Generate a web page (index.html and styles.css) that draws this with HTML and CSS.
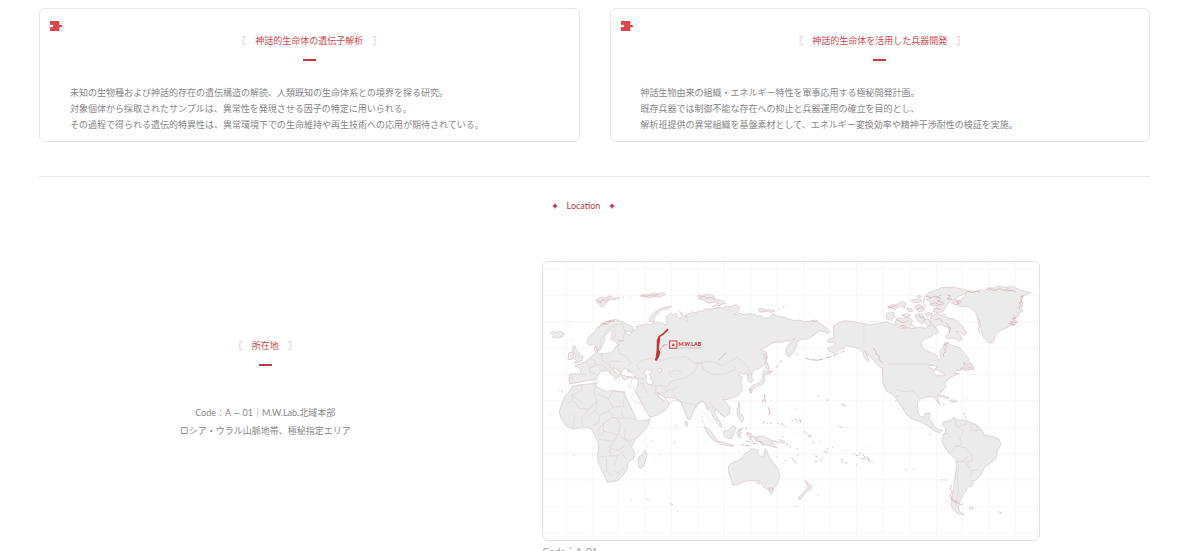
FILE: index.html
```html
<!DOCTYPE html>
<html lang="ja">
<head>
    <meta charset="UTF-8">
    <meta name="viewport" content="width=device-width, initial-scale=1.0">
    <title>M.W.Lab.</title>
    <link rel="stylesheet" href="styles.css">
</head>
<body>

<main class="page">
    <section class="cards">
        <article class="card">
            <svg class="puzzle" viewBox="0 0 36 30" aria-hidden="true"><path d="M0 0h28v12h3l2-1 3 3v4l-3 1h-5v11H0V19l3-1 5 1 2-4-2-4-5 1-3-1z"/></svg>
            <h3 class="title"><span class="bracket">〖</span>　神話的生命体の遺伝子解析　<span class="bracket">〗</span></h3>
            <div class="bar"></div>
            <p class="card-text">未知の生物種および神話的存在の遺伝構造の解読、人類既知の生命体系との境界を探る研究。<br>
            対象個体から採取されたサンプルは、異常性を発現させる因子の特定に用いられる。<br>
            その過程で得られる遺伝的特異性は、異常環境下での生命維持や再生技術への応用が期待されている。</p>
        </article>
        <article class="card">
            <svg class="puzzle" viewBox="0 0 36 30" aria-hidden="true"><path d="M0 0h28v12h3l2-1 3 3v4l-3 1h-5v11H0V19l3-1 5 1 2-4-2-4-5 1-3-1z"/></svg>
            <h3 class="title"><span class="bracket">〖</span>　神話的生命体を活用した兵器開発　<span class="bracket">〗</span></h3>
            <div class="bar"></div>
            <p class="card-text">神話生物由来の組織・エネルギー特性を軍事応用する極秘開発計画。<br>
            既存兵器では制御不能な存在への抑止と兵器運用の確立を目的とし、<br>
            解析班提供の異常組織を基盤素材として、エネルギー変換効率や精神干渉耐性の検証を実施。</p>
        </article>
    </section>

    <hr class="divider">

    <h2 class="heading">
        <svg class="spark" viewBox="0 0 12 12" aria-hidden="true"><path d="M6 0l2 4 4 2-4 2-2 4-2-4-4-2 4-2z"/></svg>
        Location
        <svg class="spark" viewBox="0 0 12 12" aria-hidden="true"><path d="M6 0l2 4 4 2-4 2-2 4-2-4-4-2 4-2z"/></svg>
    </h2>

    <section class="location">
        <div class="place">
            <h3 class="title"><span class="bracket">〖</span>　所在地　<span class="bracket">〗</span></h3>
            <div class="bar"></div>
            <p class="place-text">Code：A ― 01｜M.W.Lab.北域本部<br>ロシア・ウラル山脈地帯、極秘指定エリア</p>
        </div>
        <figure class="map">
            <svg class="map-image" viewBox="24 22 1488 834" role="img" aria-label="M.W.LAB">
                <path class="grid" d="M92 22v836M172 22v836M251 22v836M330 22v836M409 22v836M489 22v836M568 22v836M648 22v836M727 22v836M807 22v836M886 22v836M965 22v836M1045 22v836M1124 22v836M1205 22v836M1284 22v836M1363 22v836M1441 22v836M24 43h1488M24 122h1488M24 201h1488M24 280h1488M24 360h1488M24 439h1488M24 519h1488M24 597h1488M24 676h1488M24 757h1488M24 836h1488"/>

                <g class="land">
                    <!-- Eurasia -->
                    <path d="M104 388l-2-14 2-14 8-4 12 2 12-1 2-8-8-11-11-5 8-3 9 1 4-6 12-4 9-9 10-7 8-5 3-10-5-6 4-8 8 5-1 14 14 3 24-3 13-10 3-9 9-6-8-7 15-5 8 1-20-3-10 4-9-9 5-15-5-9-10 9-10 14 3 9-8 14-6 14-9 3-4-14-7-8-14 5-7-11 6-15 14-11 8-10 5-8 10-6 4-6 13-4 5-4 14-1 6-3 13 5 12 2 5 6 22 8 5 11-12 6-16-4 5 9 10 4 8-10 11-6 3-12 8 2 6-6 7 3 9-5 8 4 11-6 9 1 6-5 8 5 8 0 7 5 4-12-4-13 7-6 10-5 4 7 10-6 3 11 9 5 5-9-8-13 7 4 8 9 6 1-5 12 10 6-6-22 15-4 2-5 12 4 11-7 5 2 18-8 14 2 15-5 20 1 7-6 14 2 18-6 10 7-4 13-14 11 23-5 8 4 17-3 18 3 6 5 9-2 11 7 17-1 11-14 4 7 13 4 18 2 10 5 17 5 15-2 18 6 21-4 13 4 12 5 17 11 11 14-6 5-10-6-17-2-12 11-22 13-17 1-13 6-4 18-11 17-10 13-8-7-2-18 11-16 17-14-8 1-7 5-13-1-12 6-10-2-20 4-15 10-18 10 17 7 3 17-8 20-21 13-16 7-3 16 4 13-8 5-7-8 0-13-3-9-12 5-8-6-4 9 12 7-6 14 5 13-3 15-13 13-18 7-15 5-11-2 9 10 14 15-3 18-13 11-10-6-9-11-8-6-4 11 9 14 7 10 6 16-4 1-12-13-11-18-6-16-11-5-6-16-8-10-8 7-11 8-9 18-8 21-7 2-8-16-9-24-7-16-12-6-14-4-18 2-15-10-8-6 4 12 7 5 8 8 5-5 8 7 2 8-10 16-27 16-22 7-9-18-15-25-12-22-6-14 5-12 3-16-1-9-14-1-15-3-7-10 4-9 8 2-6 5 0 14-7 7-9-6-7-15-8-11-10-7-5 2 9 13 12 8-1 6-6-3-4 10-6-9-10-10-7-7-9-1-12 3-9 9-8 12-9 3-9 2z"/>
                    <!-- Africa -->
                    <path d="M112 395l22-4 24-3 24-1 3 10 15 7 18 8 8-5 18 2 24 4 4 13 9 18 11 23 11 24 9 9 34-6-6 17-18 24-21 21-11 20 9 20-2 15-17 13-4 21-12 18-16 15-32 5-9-22-14-31-6-25 4-25-1-17-11-17-4-15-9-10-26-2-29 5-19-12-13-20-6-20 6-19 8-24 13-15z"/>
                    <path d="M330 587l6 13-10 35-11 7-6-12 3-24 10-4z"/>
                    <!-- North America -->
                    <path d="M895 215l15-10 22-7 27 4 30 5 19 4 27-6 21-3 15 6 12 4 11 8 17 3 10-4 13 3 20-5 18 4 9-7 8-4 15 10 8 13-8 7-6-4-8 10-18 6-12 10 4 20 24 12 18 7 4 15 9-3-4-22 11-13 3-14 10 2 15 7 20 5 14 18 14 17-1 7 12 9 6 14-18 3-13-5-12 8-9-2-8 10 16-1-25 11-17 13 0 18-16 18-10 8 5 14 3 12-8-9-7-14-20 0-20 5-11 9 0 25 6 20 14 2 3-12 14-1-3 17 10 10 5 15 15 9 11 1-8 8-18-6-17-14-24-14-25-7-18-15-15-25-15-22-12-14-18-9-9-23-2-25 1-18-11-7-15-17-15-15-12-14 10 23 0 8-13-14-3-12-8-10-15-7-16-2-12-4-6 9-13 3-14 10-11-1-9-6-4-6 17-5 9-10-25-5 2-7 18-5z"/>
                    <!-- South America -->
                    <path d="M1225 503l20-5 14-10 8 8 25 1 18 7 20 10 14 15 3 12 26 4 20 10 7 14-12 20-5 25-19 14-14 10-10 21-18 19-10 1 4 11-17 9-7 13-9 12-6 13-6 20 4 15 13 8-20-3-15-14-4-21 6-29 4-33 6-38-1-28-21-18-16-22-6-16 5-16 7-12 0-10-9-8z"/>
                    <!-- Greenland -->
                    <path d="M1250 145l13-7 16-3 12-10 4-8-7-3 25-6 8 4 14-7 14 3 13-9 18 1 10-6 23 4 19-3 15 7 18 6 25 6-14 5-6 3-12 4 7 5-6 8 5 6-3 15 4 9-12 6-4 12-10 6 10 9-8 9-14 2-12 7-21 9-10 12-10 24-13-1-13-13-8-20-3-24-9-19-8-20-19-12-27-2z"/>
                    <!-- Arctic islands -->
                    <path d="M1170 125l13-12 17-5 20-9 38-1 44 10-12 9-19 8-7 9-16 4-12 14-10 18-15 6-17-6 9-8 8-9-21-1-5-10-10-8 14-4z"/>
                    <path d="M1188 185l18-8 10 5 12-3 13 12 17 2 16 12 10 9 7 15 6 5-8 8-14-9-10-2 13 12 4 11-8 7-12-9-26-1-4-7 13-8-4-16-20-10-14 2-7 8-12-18z"/>
                    <path d="M1080 206l8-16 17 2 12-5 16 10-4 15-12 8-16-2zM1054 192l2-15 10-5 14 3-4 8 5 4-12 10zM1058 157l16-8 10 3 14-11 15 3-2 15-18-5-12 11-12-5zM1128 137l18-4 16 2-6 8-18 1zM1140 155l14-6 12 6 4 12-18 5zM1140 184l10-7 14 3 6 13-8 16-12-10zM1168 192l14 2 6 12-5 9-12-9zM1146 125l10-3 5 5-9 4zM1100 182l14-5 14 5-8 8zM1116 160l14 2 4 10-13-2zM1170 178l12-5 12 4-14 8z"/>
                    <!-- Northern seas -->
                    <path d="M181 137l20-10 10 3 15-7 10 7 18-1-14 6-18 2-10 11-8 10-12-9 8-5-13 2zM315 124l18-6 8 5 14-8 16 3 11-5 10 6-15 8-20-1-8 4zM342 194l8-12 8-9 16-9 16-7 21-2-14 8-18 4-15 13-8 14 4 7-14-1zM487 122l16 1 13-5 20 6 8 10 20 4 8 8-15 4-20-8-16 4-14-9-15-5zM670 164l8-4 9 4 2 8-15 0zM690 165h15l15 4-9 4-20-3zM832 199l12-3 6 3-10 3z"/>
                    <path d="M46 234l10-3 8 3 14-4 9 6-3 10-17 4-16-3 5-5z"/>
                    <path d="M112 275l9-1 2 10 9 10 3 8 10 4-4 13-25 8 9-9-7-5 5-10-9-12zM101 296l12-5 4 10-3 12-15 3z"/>
                    <!-- East Asia and Oceania -->
                    <path d="M686 297l6 4 4 20 7 18-1 10-9-7-1-21zM686 348l12 4 14-3-12 10-11-1 2 15-8 16-16 6-20 15-4-8 10-10 20-7 10-13zM643 404l7 0 2 9-7 3zM611 446l5 3-2 13-4-5z"/>
                    <path d="M580 635l13-10 15-6 15-10 8-14 10-2 6-9 12-1 13 4-5 11 19 11 5-27 5 8 8 19 13 17 13 17 5 23-9 25-12 15-9 1-12-4-9-9-5-9-8 3-7-8-14-2-21 3-20 9-16 2-4-19-7-17zM702 700l14 1-3 14-4 5-6-9zM810 678l8 6 5 6 9 3-5 12-12 5-7 10-12 17-6-7 13-12 9-9 8-12z"/>
                    <path d="M567 530l16-4 11-13 10 8-6 14-7 17-15-2-10-9zM507 515l12 6 14 16 13 18-2 8-15-11-13-18zM545 560l20 3 17 6 16 3-4 4-40-7zM606 462l8 3 2 12 8 6 3 14-5 7-8-10-6-14zM606 535l4-10 12-4 3 3-12 5 8 6-7 3 3 12-6-3zM640 534l10 5 6 10 18-5 20 4 15 9 8 13 10 10-20-5-12-4-13 1-7-10-15-6-5-8-12-2z"/>
                    <path d="M449 502l6-2 4 10-5 7zM735 555l15 6-3 6-12-4zM739 545l9 4M1208 424l8-3 14 3 12 8-14-3zM1243 437l15-1 10 5-15 3zM1287 323l8 7 14-2 2 12-12-3-11-1zM1304 760l10-3 1 6-10 1zM1393 772l8 3-1 3z"/>
                </g>

                <!-- seas, bays and lakes cut out of the land -->
                <path class="water" d="M257 359l4-12 9-5 10 3-3 6 12 2 14 10-10 5-18-3zM328 352l10-7 10 0 2 7-9 7 7 7-1 8 7 3-1 12-13 1-8-12 3-12zM368 345l9-4 3 9-9 4zM176 377l10-4 0 13-7 0zM1180 334l16-2 12 6-10 7-12-5zM1196 348l10-3 16 9 10 6-13 4-9-5-2 7-8-8z"/>

                <!-- borders -->
                <path class="border" d="M194 281l4-25 13-24 27-21 26-5M238 215l4 26-6 12M262 204l8 30-7 22-13 18 1 22 23 8 14 22-8 8M150 323l14 14 1 16 16 5M164 312l16 5 2 15-17 8M202 297l-2 20 20 10 14-8 24 2M182 332l22-2 10 10-16 10M220 327l8 14 22 0 6 12M214 340l12 8-4 12M113 359l-2 28M138 358l18 4"/>
                <path class="border" d="M316 348l-10-18 14-14 30-4 28 8 26-10 24-2 24-3 22 18 30 4M340 388l20 8 18-5 20 7 8-16 20-6 30-8 24-18 10-20M440 350l-18-3-20 8 8 12M480 330l24-8 30-1 28 12 28-15 18-10 10 8 20 20 10 22-16 5M500 324l6 22 30 14 34-2 32-14-6-14M300 368l14 5 16-2M290 375l-2 14-8 5 18 8 4 14 20 17M308 389l16-2 4 14 10 15M352 384l12 10-2 20 12 20M374 392l18 14 20 0 20-12M362 414l24 2 14-8M386 416l6 20M412 408l14 30 26 8 30 4 8 12M400 450l14-12 12 2M482 450l15-12 18 10 6 14M500 464l14 16 10 18 14 8M524 440l12 20 12 5 8 14M300 415l-14 14 18 14 24 6M988 206v62M1059 328h120l16 5M1086 404l24 8 24-4 18 18"/>
                <path class="border" d="M138 393l4 14-30 15v18l-18 8M182 388l-4 30 8 20-24 26-28-2-20-26M112 422l32 23M186 418l34 15 14-22 34 1M268 412l-2 44-32 1-14-24M186 438l-4 30-28 20M162 464l-20 24M120 480l-6 42M140 485l2 33M182 468l12 15-2 22-20 8M194 483l28-15 12-11M222 468l10 20 34 4-6-22M266 492l20-2 26 10M232 488l-30 22-14 18M204 505l2 30-16 10M206 530l44 10 6-32-14-20M250 540l-14 20-42-5M256 548l30 12 14-10M272 520l-4 32 22 20M236 560l-12 20 4 24-36 4M224 580l25 8 20-12M228 604h20l20-14M215 610v42l16 10M248 604l-10 30M262 598l10 14M268 640l-20 16M240 648l10 8"/>
                <path class="border" d="M1260 490l5 25 22 14-12 20 6 20-20 6-12 20M1265 515l26-4 2-10M1310 505l-2 22 16 2 2-15M1324 529l15-3M1220 540l18-4 12 14M1262 575l28 4 20 20 4 18-20 8M1262 622l26-2 10-15M1294 625l16 24 20-4M1312 648l-4 20M1272 630l-5 35 4 42-8 55"/>
                <path class="lake" d="M549 318l12-10 12-14"/>

                <!-- small islands -->
                <g class="islands">
                    <path d="M106 200h2M113 257h3M264 128h3M285 129h3M71 407h3M78 410h4M47 479v2M114 602h3M347 561h3M353 557h3M337 577h2M309 587h3M372 604h2M358 623h2M364 619h1M286 737h4M334 735h3M341 736h3M407 748l6 2M427 769h3M418 562l2 4M424 511v4M424 524v2M502 486v4M504 500v4M508 507v3"/>
                    <path d="M780 296h3M786 299h4M810 311l15 4M828 315l20 2 18-4M872 311l18-5M895 302l15-5M918 294l12-6M730 161h3M744 160l4-5M757 155h2M848 423l5 3M876 436h4M689 420l2 24M613 441l-4 3M723 340l8-9M734 324l8-7M704 355l7-4"/>
                    <path d="M702 458l2 14-2 10M684 434v8M683 506l7-4M695 506h4M705 506h5M728 507h3M734 511h2M742 506l3 7M749 515h2M770 498h4M780 494l5 2M785 501l4 3M797 499h3M784 462h2M795 494l2 10M808 529l5 7M818 537l8 12M828 542v5M788 537h2M833 567l3-5M852 564l3-3M841 604l7 2M839 619l8 3M855 616h5M862 610h3M866 592h12M876 583h5M786 583h4M790 600v5M770 610l8 8M778 620l8 6M743 625h2M724 607h2M750 618h3M756 618h2M909 514h4M917 518h5M930 531v2M892 579h3M918 616h6M922 623h5M932 625h6M963 631h3M938 587h3M964 602l10 2M974 594l4 6M984 599l8 12M979 612l12 2M996 604l8 14M956 600h4M998 614l7 8M1010 622h4M1000 576h2M920 448l14 7M876 437h4M850 722h3M784 756h3"/>
                    <path d="M632 521l5 3M636 533l2 10M646 551l10 12M650 546l-8 9M653 567h7M633 559l14 3M619 570l8 2M632 575l12-3M671 560l10 4M665 553h4M712 559l12 2M723 560l10 7M753 567l8 5M764 576l4 3M1091 464h3M1105 461h4M1082 438h3M1184 539h4M1191 518h2M1112 646h4M1135 643h3M1214 676h2M1222 676h3M1233 676h3M1225 450h4M1289 475v6M1292 485v5M1298 432h2M1239 428h4M1086 426h3"/>
                </g>

                <!-- jagged northern coasts and fjords -->
                <path class="coast" d="M190 220l8-8 4-6 8 2 5-8 8 1 5-6M205 211l13-3 9-7 13-2M186 136l10 6 8-8 8 6 12-9M322 123l14 2 10-5 12 4 14-6M495 128l12-3 8 6 16-2 10 8M1060 160l18-4 9-9M1085 195l20 10 16-7M1094 218l8-6 14 5M1145 165l15-8 8 5M1150 180l9 9 8-4M1175 125l12 4 17-5 14 9-10 7 18 3M1184 150l18-6 13 7 14-4M1195 165l8-5 15 5M1200 196l15-5 10 12M1220 120l-16 10M1236 120l12 4-10 9 14 0M1170 130l-4 14 8 12M1130 211l10 5-4 6M1235 205l13 18-6 12M1260 150l14-3-9-6 15 0M1300 110l14 4 12-5 10 4M1355 105l12-3 9 6 20-6 12 6 15-6M1412 110l18-3 14 5M1458 125l9-1-9 9 4 9-9 2 7 9-9 4 6 8M1437 180l6 12-11-2 12 15-18-4 12 10-17-5M1328 190l8 10-6 4 6 13-5 5 5 14M1243 262l-14 9 9 3-9 9 5 8-9 8 3 8M1250 690l-3 14 5 9-6 8 5 14 8 8 10 2 9 6 7-3M1249 727l8 12 11 1M1015 280l9 12-2 5 12 8-2 9 12 10M670 676l6 5M1275 345l9-6 8 10 9-5M530 157l12-6 14 2"/>

                <!-- Ural range and the site marker -->
                <path class="range" d="M398 225l-12 12-13 9-3 20-1 22 3 7-5 4 1 8-4 8"/>
                <path class="peak" d="M371 247l3 3-3 35 4 9-4 13-7 11-3-2 3-10 2-20 1-30z"/>
                <path class="leader" d="M372 290l15-19h10"/>
                <rect class="marker" x="404" y="259" width="22" height="22"/>
                <path class="marker-dot" d="M415 265l5 9h-10z"/>
                <text class="map-label" x="431" y="275">M.W.LAB</text>
                <path class="label-line" d="M433 280h66"/>
            </svg>
            <figcaption class="caption">Code：A-01</figcaption>
        </figure>
    </section>
</main>

</body>
</html>
```
FILE: styles.css
```css
* {
    box-sizing: border-box;
}
body {
    margin: 0;
    font-family: Lato, "Noto Sans CJK JP", sans-serif;
    font-size: 9px;
    color: #888;
    background: #fff;
}
h2, h3, p, figure {
    margin: 0;
}
.page {
    padding: 8px 50px 0 39px;
}
.cards {
    display: grid;
    grid-template-columns: 1fr 1fr;
    gap: 30px;
}
.card {
    padding: 12px 10px 8px;
    border: 1px solid #e6e6e6;
    border-radius: 6px;
}
.puzzle {
    display: block;
    width: 12px;
    height: 10px;
    fill: #dc4848;
}
.title {
    margin-top: 3px;
    font-size: 9px;
    font-weight: 400;
    line-height: 14px;
    text-align: center;
    color: #cc474c;
}
.bracket {
    color: #cf8a8e;
}
.bar {
    width: 13px;
    height: 2px;
    margin: 11px auto 0;
    background: #c23a42;
}
.card-text {
    margin-top: 24px;
    padding: 0 20px;
    line-height: 16px;
}
.divider {
    height: 1px;
    margin: 34px 0 0;
    border: 0;
    background: #e8e8e8;
}
.heading {
    display: flex;
    justify-content: center;
    align-items: center;
    gap: 9px;
    margin-top: 22px;
    padding-right: 22px;
    font-size: 9px;
    font-weight: 400;
    line-height: 14px;
    color: #b83a40;
}
.spark {
    width: 6px;
    height: 6px;
    fill: #b83a40;
}
.location {
    display: grid;
    grid-template-columns: 10fr 11fr;
    gap: 51px;
    margin-top: 48px;
    padding-right: 110px;
}
.place {
    padding-top: 75px;
    text-align: center;
}
.place-text {
    margin-top: 38px;
    line-height: 18px;
}
.map-image {
    display: block;
    width: 100%;
    border: 1px solid #e2e2e2;
    border-radius: 6px;
    background: #fff;
}
.caption {
    margin-top: 2px;
    font-size: 10px;
    line-height: 16px;
    color: #999;
}
.grid {
    fill: none;
    stroke: #f6f6f6;
    stroke-width: 3;
}
.land {
    fill: #ebebeb;
    stroke: #dcc3c5;
    stroke-width: 2;
    stroke-linejoin: round;
}
.water {
    fill: #fff;
    stroke: #dcc3c5;
    stroke-width: 2;
}
.border {
    fill: none;
    stroke: #dfd3d4;
    stroke-width: 2;
}
.lake {
    fill: none;
    stroke: #d0c4c5;
    stroke-width: 3;
}
.islands {
    fill: none;
    stroke: #d6b8ba;
    stroke-width: 3;
}
.coast {
    fill: none;
    stroke: #dba6a9;
    stroke-width: 2;
}
.range {
    fill: none;
    stroke: #c83238;
    stroke-width: 5;
    stroke-linecap: round;
    stroke-linejoin: round;
}
.peak {
    fill: #c83238;
    stroke: #c83238;
    stroke-width: 2;
}
.leader {
    fill: none;
    stroke: #d98286;
    stroke-width: 2;
}
.marker {
    fill: none;
    stroke: #cf4046;
    stroke-width: 3;
}
.marker-dot {
    fill: #cf4046;
}
.map-label {
    font-family: Lato, sans-serif;
    font-size: 16px;
    font-weight: 900;
    fill: #c83238;
}
.label-line {
    stroke: #e8a6a8;
    stroke-width: 2;
}
```
